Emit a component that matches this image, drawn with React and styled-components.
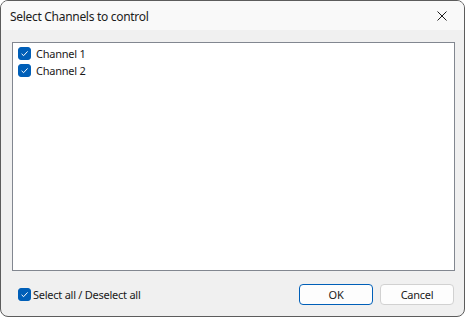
import React, { useState } from "react";
import styled, { createGlobalStyle } from "styled-components";

const GlobalStyle = createGlobalStyle`
  html, body {
    margin: 0;
    padding: 0;
    background: #ffffff;
  }
  body {
    font-family: "Segoe UI", "Noto Sans", sans-serif;
    font-size: 11px;
    letter-spacing: -0.25px;
    color: #1a1a1a;
  }
`;

const Window = styled.div`
  box-sizing: border-box;
  width: 465px;
  height: 317px;
  border: 1px solid #5c5c5c;
  border-radius: 8px;
  background: #f0f0f0;
  overflow: hidden;
  display: flex;
  flex-direction: column;
`;

const TitleBar = styled.div`
  height: 29px;
  flex: none;
  display: flex;
  align-items: center;
  justify-content: space-between;
  padding: 0 0 0 9px;
  background: #f9f9f9;
`;

const Title = styled.span`
  font-size: 12px;
  letter-spacing: -0.3px;
  color: #1c1c1c;
  padding-top: 1px;
`;

const CloseButton = styled.button`
  width: 46px;
  height: 29px;
  border: 0;
  padding: 0;
  background: transparent;
  display: flex;
  align-items: center;
  justify-content: center;
  margin-right: -1px;
`;

const Content = styled.div`
  flex: 1;
  display: flex;
  flex-direction: column;
  padding: 12px 9px 0 11px;
`;

const ListBox = styled.div`
  box-sizing: border-box;
  height: 229px;
  border: 1px solid #828790;
  background: #ffffff;
  padding: 2px 5px;
  display: flex;
  flex-direction: column;
`;

const Row = styled.label`
  height: 17px;
  display: flex;
  align-items: center;
  gap: ${(p) => p.$gap || 5}px;
  cursor: default;
`;

const Box = styled.span`
  box-sizing: border-box;
  width: 13px;
  height: 13px;
  border-radius: 3px;
  flex: none;
  background: ${(p) => (p.$checked ? "#005fb8" : "#ffffff")};
  border: 1px solid ${(p) => (p.$checked ? "#005fb8" : "#8a8a8a")};
  display: flex;
  align-items: center;
  justify-content: center;
`;

const Footer = styled.div`
  margin-top: 13px;
  display: flex;
  align-items: center;
  padding-left: 6px;
  padding-right: 1px;
`;

const Spacer = styled.div`
  flex: 1;
`;

const Button = styled.button`
  box-sizing: border-box;
  width: 74px;
  height: 21px;
  margin-left: ${(p) => p.$ml || 0}px;
  border-radius: 4px;
  font-family: inherit;
  font-size: 11px;
  letter-spacing: -0.25px;
  color: #1a1a1a;
  background: #fdfdfd;
  border: 1px solid ${(p) => (p.$primary ? "#005fb8" : "#d1d1d1")};
  padding: 0;
`;

const Check = ({ checked, onClick }) => (
  <Box $checked={checked} onClick={onClick}>
    {checked && (
      <svg width="9" height="9" viewBox="0 0 9 9">
        <path d="M1.6 4.8 L3.6 6.7 L7.6 2.4" fill="none" stroke="#ffffff" strokeWidth="1" />
      </svg>
    )}
  </Box>
);

export default function App() {
  const [channels, setChannels] = useState([true, true]);
  const all = channels.every(Boolean);

  const toggle = (i) => setChannels(channels.map((c, j) => (j === i ? !c : c)));

  return (
    <>
      <GlobalStyle />
      <Window>
        <TitleBar>
          <Title>Select Channels to control</Title>
          <CloseButton>
            <svg width="10" height="10" viewBox="0 0 10 10">
              <path d="M0.5 0.5 L9.5 9.5 M9.5 0.5 L0.5 9.5" stroke="#1c1c1c" strokeWidth="1" />
            </svg>
          </CloseButton>
        </TitleBar>
        <Content>
          <ListBox>
            {channels.map((c, i) => (
              <Row key={i}>
                <Check checked={c} onClick={() => toggle(i)} />
                Channel {i + 1}
              </Row>
            ))}
          </ListBox>
          <Footer>
            <Row $gap={2}>
              <Check checked={all} onClick={() => setChannels(channels.map(() => !all))} />
              Select all / Deselect all
            </Row>
            <Spacer />
            <Button $primary>OK</Button>
            <Button $ml={7}>Cancel</Button>
          </Footer>
        </Content>
      </Window>
    </>
  );
}
